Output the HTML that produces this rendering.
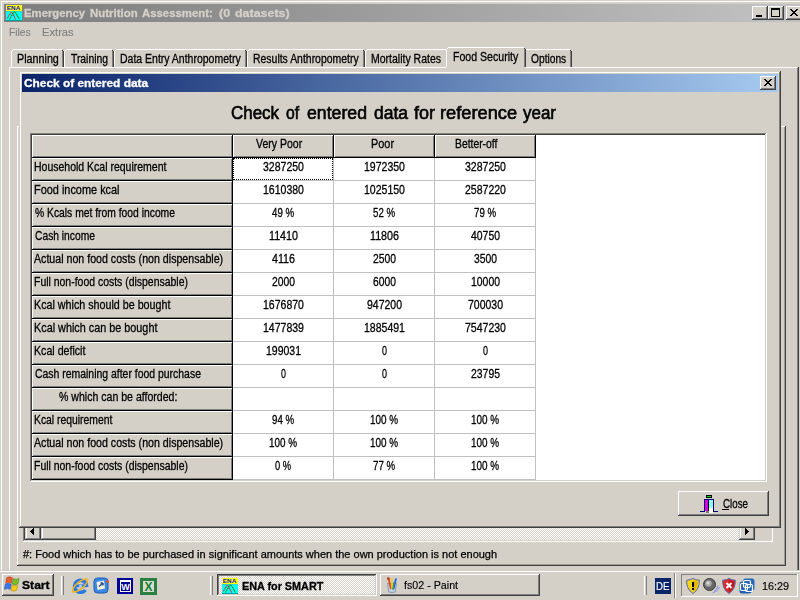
<!DOCTYPE html>
<html><head><meta charset="utf-8"><title>ENA for SMART</title>
<style>
html,body{margin:0;padding:0}
body{width:800px;height:600px;overflow:hidden;position:relative;background:#d4d0c8;font-family:"Liberation Sans",sans-serif}
div,span,i,b{position:absolute;box-sizing:border-box}
.tx{white-space:pre;line-height:20px;transform-origin:0 0;display:block}
.raised{box-shadow:inset -1px -1px #404040,inset 1px 1px #fff,inset -2px -2px #808080,inset 2px 2px #d4d0c8;background:#d4d0c8}
.raised2{box-shadow:inset -1px -1px #404040,inset 1px 1px #d4d0c8,inset -2px -2px #808080,inset 2px 2px #fff;background:#d4d0c8}
.sunk1{box-shadow:inset -1px -1px #fff,inset 1px 1px #808080}
.w{background:#fff}.g{background:#808080}.k{background:#404040}.bk{background:#000}.lg{background:#c0c0c0}
.dither{background-image:conic-gradient(#fff 25%,#d4d0c8 0 50%,#fff 0 75%,#d4d0c8 0);background-size:2px 2px}
#texts{left:0;top:0;width:800px;height:600px;will-change:transform}
.tx{-webkit-text-stroke:0.3px currentColor}

</style></head><body>
<!-- main application window -->
<div class="w" style="left:1px;top:1px;width:799px;height:1px;"></div>
<div class="w" style="left:1px;top:1px;width:1px;height:569px;"></div>
<div id="titlebar" style="left:4px;top:4px;width:796px;height:18px;background:linear-gradient(90deg,#808080 0,#808080 6%,#c0c0c0 96%)"></div>
<div id="appicon" style="left:6px;top:5px;width:16px;height:16px;"><svg width="16" height="16" viewBox="0 0 16 16" style="position:absolute;left:0;top:0">
<rect width="16" height="6" fill="#ffff00"/><rect y="6" width="16" height="10" fill="#00ffff"/>
<rect y="6" width="16" height="0.600" fill="#58b8b0"/>
<text x="0.800" y="5" font-family="Liberation Sans,sans-serif" font-weight="bold" font-size="6" fill="#1010d8" textLength="13.500" lengthAdjust="spacingAndGlyphs">ENA</text>
<path d="M1.300 13.200 L4.900 7.600 Q5.600 6.700 6.300 7.800 L9.600 14.500" fill="none" stroke="#e02818" stroke-width="1.100" stroke-dasharray="1.500 0.500"/>
<path d="M3.500 14.500 L7.300 7.800 Q8.500 6.300 9.700 7.800 L13.500 14.500" fill="none" stroke="#008800" stroke-width="1.100" stroke-dasharray="1.500 0.500"/>
<rect x="0" y="15" width="16" height="1" fill="#00a0a0"/>
</svg></div>
<div class="raised" style="left:752px;top:6px;width:16px;height:14px;"><i class="bk" style="left:4px;top:9px;width:6px;height:2px"></i></div>
<div class="raised" style="left:768px;top:6px;width:16px;height:14px;"><i style="left:3px;top:2px;width:9px;height:9px;border:1px solid #000;border-top-width:2px"></i></div>
<div class="raised" style="left:786px;top:6px;width:16px;height:14px;"><svg width="8" height="7" viewBox="0 0 8 7" style="position:absolute;left:4px;top:3px" shape-rendering="crispEdges"><path d="M0 0h2v1h1v1h2v-1h1v-1h2v1h-1v1h-1v1h-1v1h1v1h1v1h1v1h-2v-1h-1v-1h-2v1h-1v1h-2v-1h1v-1h1v-1h1v-1h-1v-1h-1v-1h-1z" fill="#000"/></svg></div>
<!-- tab control -->
<div class="w" style="left:9px;top:67px;width:788px;height:1px;"></div>
<div class="w" style="left:9px;top:67px;width:1px;height:503px;"></div>
<div class="g" style="left:797px;top:68px;width:1px;height:502px;"></div>
<div class="k" style="left:798px;top:67px;width:1px;height:503px;"></div>
<div class="w" style="left:11px;top:51px;width:1px;height:16px;"></div>
<div class="w" style="left:12px;top:50px;width:1px;height:1px;"></div>
<div class="w" style="left:13px;top:49px;width:49px;height:1px;"></div>
<div class="k" style="left:62px;top:50px;width:1px;height:1px;"></div>
<div class="g" style="left:62px;top:51px;width:1px;height:16px;"></div>
<div class="k" style="left:63px;top:51px;width:1px;height:16px;"></div>
<div class="w" style="left:64px;top:51px;width:1px;height:16px;"></div>
<div class="w" style="left:65px;top:50px;width:1px;height:1px;"></div>
<div class="w" style="left:66px;top:49px;width:46px;height:1px;"></div>
<div class="k" style="left:112px;top:50px;width:1px;height:1px;"></div>
<div class="g" style="left:112px;top:51px;width:1px;height:16px;"></div>
<div class="k" style="left:113px;top:51px;width:1px;height:16px;"></div>
<div class="w" style="left:114px;top:51px;width:1px;height:16px;"></div>
<div class="w" style="left:115px;top:50px;width:1px;height:1px;"></div>
<div class="w" style="left:116px;top:49px;width:129px;height:1px;"></div>
<div class="k" style="left:245px;top:50px;width:1px;height:1px;"></div>
<div class="g" style="left:245px;top:51px;width:1px;height:16px;"></div>
<div class="k" style="left:246px;top:51px;width:1px;height:16px;"></div>
<div class="w" style="left:247px;top:51px;width:1px;height:16px;"></div>
<div class="w" style="left:248px;top:50px;width:1px;height:1px;"></div>
<div class="w" style="left:249px;top:49px;width:114px;height:1px;"></div>
<div class="k" style="left:363px;top:50px;width:1px;height:1px;"></div>
<div class="g" style="left:363px;top:51px;width:1px;height:16px;"></div>
<div class="k" style="left:364px;top:51px;width:1px;height:16px;"></div>
<div class="w" style="left:365px;top:51px;width:1px;height:16px;"></div>
<div class="w" style="left:366px;top:50px;width:1px;height:1px;"></div>
<div class="w" style="left:367px;top:49px;width:79px;height:1px;"></div>
<div class="k" style="left:446px;top:50px;width:1px;height:1px;"></div>
<div class="g" style="left:446px;top:51px;width:1px;height:16px;"></div>
<div class="k" style="left:447px;top:51px;width:1px;height:16px;"></div>
<div class="w" style="left:524px;top:51px;width:1px;height:16px;"></div>
<div class="w" style="left:525px;top:50px;width:1px;height:1px;"></div>
<div class="w" style="left:526px;top:49px;width:44px;height:1px;"></div>
<div class="k" style="left:570px;top:50px;width:1px;height:1px;"></div>
<div class="g" style="left:570px;top:51px;width:1px;height:16px;"></div>
<div class="k" style="left:571px;top:51px;width:1px;height:16px;"></div>
<div style="left:446px;top:47px;width:80px;height:22px;background:#d4d0c8"></div>
<div class="w" style="left:446px;top:49px;width:1px;height:18px;"></div>
<div class="w" style="left:447px;top:48px;width:1px;height:1px;"></div>
<div class="w" style="left:448px;top:47px;width:76px;height:1px;"></div>
<div class="k" style="left:524px;top:48px;width:1px;height:1px;"></div>
<div class="g" style="left:524px;top:49px;width:1px;height:18px;"></div>
<div class="k" style="left:525px;top:49px;width:1px;height:18px;"></div>
<div class="w" style="left:17px;top:126px;width:1px;height:439px;"></div>
<div class="w" style="left:17px;top:126px;width:768px;height:1px;"></div>
<div style="left:784px;top:127px;width:1px;height:438px;background:#a09c96"></div>
<div style="left:18px;top:564px;width:767px;height:1px;background:#a09c96"></div>
<div class="k" style="left:785px;top:126px;width:1px;height:440px;"></div>
<div class="k" style="left:17px;top:565px;width:769px;height:1px;"></div>
<div style="left:23px;top:500px;width:750px;height:42px;box-shadow:inset -1px -1px #fff,inset 1px 1px #808080,inset -2px -2px #d4d0c8,inset 2px 2px #404040"></div>
<div class="dither" style="left:25px;top:524px;width:730px;height:16px;"></div>
<div class="raised2" style="left:25px;top:524px;width:16px;height:16px;"><svg width="4" height="7" style="position:absolute;left:5px;top:4px" shape-rendering="crispEdges"><path d="M4 0v7h-1v-1h-1v-1h-1v-1h-1v-1h1v-1h1v-1h1v-1z" fill="#000"/></svg></div>
<div class="raised2" style="left:41px;top:524px;width:55px;height:16px;"></div>
<div class="raised2" style="left:739px;top:524px;width:16px;height:16px;"><svg width="4" height="7" style="position:absolute;left:6px;top:4px" shape-rendering="crispEdges"><path d="M0 0v7h1v-1h1v-1h1v-1h1v-1h-1v-1h-1v-1h-1v-1z" fill="#000"/></svg></div>
<!-- dialog: Check of entered data -->
<div id="dialog" style="left:19px;top:71px;width:762px;height:457px;background:#d4d0c8;box-shadow:inset -1px -1px #404040,inset 1px 1px #d4d0c8,inset -2px -2px #808080,inset 2px 2px #fff"></div>
<div id="dlgtitle" style="left:22px;top:74px;width:756px;height:18px;background:linear-gradient(90deg,#0a246a,#a6caf0)"></div>
<div class="raised" style="left:760px;top:76px;width:16px;height:14px;"><svg width="8" height="7" viewBox="0 0 8 7" style="position:absolute;left:4px;top:3px" shape-rendering="crispEdges"><path d="M0 0h2v1h1v1h2v-1h1v-1h2v1h-1v1h-1v1h-1v1h1v1h1v1h1v1h-2v-1h-1v-1h-2v1h-1v1h-2v-1h1v-1h1v-1h1v-1h-1v-1h-1v-1h-1z" fill="#000"/></svg></div>
<div id="grid" style="left:30px;top:133px;width:737px;height:349px;background:#fff;box-shadow:inset -1px -1px #fff,inset 1px 1px #808080,inset -2px -2px #d4d0c8,inset 2px 2px #404040"></div>
<div style="left:32px;top:135px;width:200px;height:22px;background:#d4d0c8;box-shadow:inset 1px 1px #fff,inset -1px -1px #808080"></div>
<div style="left:233px;top:135px;width:100px;height:22px;background:#d4d0c8;box-shadow:inset 1px 1px #fff,inset -1px -1px #808080"></div>
<div style="left:334px;top:135px;width:100px;height:22px;background:#d4d0c8;box-shadow:inset 1px 1px #fff,inset -1px -1px #808080"></div>
<div style="left:435px;top:135px;width:100px;height:22px;background:#d4d0c8;box-shadow:inset 1px 1px #fff,inset -1px -1px #808080"></div>
<div style="left:32px;top:158px;width:200px;height:22px;background:#d4d0c8;box-shadow:inset 1px 1px #fff,inset -1px -1px #808080"></div>
<div style="left:32px;top:181px;width:200px;height:22px;background:#d4d0c8;box-shadow:inset 1px 1px #fff,inset -1px -1px #808080"></div>
<div style="left:32px;top:204px;width:200px;height:22px;background:#d4d0c8;box-shadow:inset 1px 1px #fff,inset -1px -1px #808080"></div>
<div style="left:32px;top:227px;width:200px;height:22px;background:#d4d0c8;box-shadow:inset 1px 1px #fff,inset -1px -1px #808080"></div>
<div style="left:32px;top:250px;width:200px;height:22px;background:#d4d0c8;box-shadow:inset 1px 1px #fff,inset -1px -1px #808080"></div>
<div style="left:32px;top:273px;width:200px;height:22px;background:#d4d0c8;box-shadow:inset 1px 1px #fff,inset -1px -1px #808080"></div>
<div style="left:32px;top:296px;width:200px;height:22px;background:#d4d0c8;box-shadow:inset 1px 1px #fff,inset -1px -1px #808080"></div>
<div style="left:32px;top:319px;width:200px;height:22px;background:#d4d0c8;box-shadow:inset 1px 1px #fff,inset -1px -1px #808080"></div>
<div style="left:32px;top:342px;width:200px;height:22px;background:#d4d0c8;box-shadow:inset 1px 1px #fff,inset -1px -1px #808080"></div>
<div style="left:32px;top:365px;width:200px;height:22px;background:#d4d0c8;box-shadow:inset 1px 1px #fff,inset -1px -1px #808080"></div>
<div style="left:32px;top:388px;width:200px;height:22px;background:#d4d0c8;box-shadow:inset 1px 1px #fff,inset -1px -1px #808080"></div>
<div style="left:32px;top:411px;width:200px;height:22px;background:#d4d0c8;box-shadow:inset 1px 1px #fff,inset -1px -1px #808080"></div>
<div style="left:32px;top:434px;width:200px;height:22px;background:#d4d0c8;box-shadow:inset 1px 1px #fff,inset -1px -1px #808080"></div>
<div style="left:32px;top:457px;width:200px;height:22px;background:#d4d0c8;box-shadow:inset 1px 1px #fff,inset -1px -1px #808080"></div>
<div class="bk" style="left:32px;top:157px;width:504px;height:1px;"></div>
<div class="bk" style="left:232px;top:135px;width:1px;height:345px;"></div>
<div class="bk" style="left:333px;top:135px;width:1px;height:22px;"></div>
<div class="bk" style="left:434px;top:135px;width:1px;height:22px;"></div>
<div class="bk" style="left:535px;top:135px;width:1px;height:22px;"></div>
<div class="bk" style="left:32px;top:180px;width:200px;height:1px;"></div>
<div class="bk" style="left:32px;top:203px;width:200px;height:1px;"></div>
<div class="bk" style="left:32px;top:226px;width:200px;height:1px;"></div>
<div class="bk" style="left:32px;top:249px;width:200px;height:1px;"></div>
<div class="bk" style="left:32px;top:272px;width:200px;height:1px;"></div>
<div class="bk" style="left:32px;top:295px;width:200px;height:1px;"></div>
<div class="bk" style="left:32px;top:318px;width:200px;height:1px;"></div>
<div class="bk" style="left:32px;top:341px;width:200px;height:1px;"></div>
<div class="bk" style="left:32px;top:364px;width:200px;height:1px;"></div>
<div class="bk" style="left:32px;top:387px;width:200px;height:1px;"></div>
<div class="bk" style="left:32px;top:410px;width:200px;height:1px;"></div>
<div class="bk" style="left:32px;top:433px;width:200px;height:1px;"></div>
<div class="bk" style="left:32px;top:456px;width:200px;height:1px;"></div>
<div class="bk" style="left:32px;top:479px;width:200px;height:1px;"></div>
<div class="lg" style="left:333px;top:158px;width:1px;height:322px;"></div>
<div class="lg" style="left:434px;top:158px;width:1px;height:322px;"></div>
<div class="lg" style="left:535px;top:158px;width:1px;height:322px;"></div>
<div class="lg" style="left:233px;top:180px;width:303px;height:1px;"></div>
<div class="lg" style="left:233px;top:203px;width:303px;height:1px;"></div>
<div class="lg" style="left:233px;top:226px;width:303px;height:1px;"></div>
<div class="lg" style="left:233px;top:249px;width:303px;height:1px;"></div>
<div class="lg" style="left:233px;top:272px;width:303px;height:1px;"></div>
<div class="lg" style="left:233px;top:295px;width:303px;height:1px;"></div>
<div class="lg" style="left:233px;top:318px;width:303px;height:1px;"></div>
<div class="lg" style="left:233px;top:341px;width:303px;height:1px;"></div>
<div class="lg" style="left:233px;top:364px;width:303px;height:1px;"></div>
<div class="lg" style="left:233px;top:387px;width:303px;height:1px;"></div>
<div class="lg" style="left:233px;top:410px;width:303px;height:1px;"></div>
<div class="lg" style="left:233px;top:433px;width:303px;height:1px;"></div>
<div class="lg" style="left:233px;top:456px;width:303px;height:1px;"></div>
<div class="lg" style="left:233px;top:479px;width:303px;height:1px;"></div>
<div style="left:233px;top:158px;width:100px;height:22px;border:1px dotted #000"></div>
<div id="closebtn" class="raised" style="left:678px;top:491px;width:91px;height:25px;"><svg width="18" height="18" viewBox="0 0 18 18" style="position:absolute;left:22px;top:4px" shape-rendering="crispEdges">
<rect x="6" y="0" width="6" height="3" fill="#000"/><rect x="7" y="1" width="4" height="1" fill="#00e000"/>
<rect x="4" y="4" width="10" height="1" fill="#000080"/><rect x="4" y="4" width="1" height="13" fill="#000080"/><rect x="13" y="4" width="1" height="13" fill="#000080"/>
<rect x="0" y="16" width="5" height="1" fill="#000080"/><rect x="13" y="16" width="5" height="1" fill="#000080"/>
<rect x="5" y="5" width="3" height="11" fill="#d800d8"/>
<rect x="8" y="5" width="1" height="11" fill="#000"/>
<rect x="9" y="5" width="4" height="8" fill="#90ffff"/><rect x="9" y="13" width="4" height="5" fill="#fff"/>
<rect x="6" y="16" width="3" height="2" fill="#808080"/>
</svg><i class="bk" style="left:44px;top:18px;width:7px;height:1px"></i></div>
<!-- taskbar -->
<div id="taskbar" style="left:0px;top:570px;width:800px;height:30px;background:#d4d0c8"></div>
<div class="w" style="left:0px;top:571px;width:800px;height:1px;"></div>
<div id="start" class="raised" style="left:2px;top:574px;width:52px;height:22px;"><svg width="16" height="16" viewBox="0 0 16 16" style="position:absolute;left:2px;top:2px">
<path d="M2.600 1.800 Q5.400 -0.200 8.400 1.800 L7.400 7.200 Q4.600 5.400 1.600 7.200 Z" fill="#f05a28" stroke="#a03818" stroke-width="0.500"/>
<path d="M9.200 2.600 Q12 4.200 15 2.400 L14 7.800 Q11 9.600 8.200 8 Z" fill="#78c028" stroke="#487818" stroke-width="0.500"/>
<path d="M1.400 8.200 Q4.200 6.400 7.200 8.200 L6.200 13.400 Q3.400 11.600 0.400 13.400 Z" fill="#3878e8" stroke="#2048a0" stroke-width="0.500"/>
<path d="M8 9 Q10.800 10.600 13.800 8.800 L12.800 14.200 Q10 16 7 14.400 Z" fill="#f8c818" stroke="#a88410" stroke-width="0.500"/>
</svg></div>
<div class="w" style="left:61px;top:576px;width:1px;height:19px;"></div>
<div class="g" style="left:63px;top:576px;width:1px;height:19px;"></div>
<div style="left:72px;top:577px;width:17px;height:17px;"><svg width="17" height="17" viewBox="0 0 17 17">
<path d="M14.600 9.800 A6 6 0 1 0 13.400 13" fill="none" stroke="#2a7ae4" stroke-width="3.600"/>
<rect x="3.500" y="7.400" width="11.500" height="2.800" fill="#2a7ae4"/>
<circle cx="8.500" cy="9" r="1.500" fill="#a8d0f8"/>
<ellipse cx="8" cy="8.500" rx="9.200" ry="3.400" transform="rotate(-40 8 8.500)" fill="none" stroke="#f0b418" stroke-width="1.600"/>
</svg></div>
<div style="left:93px;top:577px;width:17px;height:17px;"><svg width="17" height="17" viewBox="0 0 17 17">
<rect x="1" y="1" width="14" height="15" rx="3.500" fill="#3a8ae4" stroke="#1c58b4"/>
<path d="M3.500 5 L11 3.500 L12 11.500 L4.500 13 Z" fill="#f4f0dc"/>
<path d="M6 9.500 L10 6 M10 6 L10 8.500 M10 6 L7.600 6" stroke="#204890" stroke-width="1.300" fill="none"/>
<circle cx="14.500" cy="4.500" r="1.400" fill="#e05030"/>
</svg></div>
<div style="left:117px;top:578px;width:16px;height:16px;background:#000098"><svg width="16" height="16" viewBox="0 0 16 16" style="position:absolute;left:0;top:0">
<rect x="3.500" y="3" width="10" height="10.500" fill="none" stroke="#fff" stroke-width="1"/><rect x="3" y="2" width="11" height="2" fill="#fff"/>
<text x="8.500" y="12" font-family="Liberation Sans,sans-serif" font-weight="bold" font-size="9" fill="#fff" text-anchor="middle">W</text></svg></div>
<div style="left:140px;top:578px;width:17px;height:17px;background:#2a8040"><svg width="17" height="17" viewBox="0 0 17 17" style="position:absolute;left:0;top:0">
<rect x="3" y="3" width="11" height="11" fill="#d8dcd0"/>
<text x="8.500" y="13" font-family="Liberation Sans,sans-serif" font-weight="bold" font-size="12" fill="#108030" text-anchor="middle">X</text></svg></div>
<div class="w" style="left:210px;top:576px;width:1px;height:19px;"></div>
<div class="g" style="left:212px;top:576px;width:1px;height:19px;"></div>
<div id="task1" style="left:217px;top:574px;width:160px;height:22px;background-image:conic-gradient(#fff 25%,#d4d0c8 0 50%,#fff 0 75%,#d4d0c8 0);background-size:2px 2px;box-shadow:inset -1px -1px #fff,inset 1px 1px #404040,inset -2px -2px #d4d0c8,inset 2px 2px #808080"></div>
<div style="left:222px;top:578px;width:16px;height:16px;"><svg width="16" height="16" viewBox="0 0 16 16" style="position:absolute;left:0;top:0">
<rect width="16" height="6" fill="#ffff00"/><rect y="6" width="16" height="10" fill="#00ffff"/>
<rect y="6" width="16" height="0.600" fill="#58b8b0"/>
<text x="0.800" y="5" font-family="Liberation Sans,sans-serif" font-weight="bold" font-size="6" fill="#1010d8" textLength="13.500" lengthAdjust="spacingAndGlyphs">ENA</text>
<path d="M1.300 13.200 L4.900 7.600 Q5.600 6.700 6.300 7.800 L9.600 14.500" fill="none" stroke="#e02818" stroke-width="1.100" stroke-dasharray="1.500 0.500"/>
<path d="M3.500 14.500 L7.300 7.800 Q8.500 6.300 9.700 7.800 L13.500 14.500" fill="none" stroke="#008800" stroke-width="1.100" stroke-dasharray="1.500 0.500"/>
<rect x="0" y="15" width="16" height="1" fill="#00a0a0"/>
</svg></div>
<div id="task2" class="raised" style="left:380px;top:574px;width:160px;height:22px;"></div>
<div style="left:386px;top:577px;width:12px;height:16px;"><svg width="12" height="16" viewBox="0 0 12 16">
<path d="M1.500 6.500 L10.500 6.500 L9.200 15 Q6 16 2.800 15 Z" fill="#c4d0e8" stroke="#7888b0" stroke-width="0.800"/>
<path d="M2.500 1.500 L5 12" stroke="#e04818" stroke-width="1.800"/><circle cx="2.300" cy="1.500" r="1.300" fill="#b03010"/>
<path d="M5.800 1 L6 12" stroke="#f0c820" stroke-width="1.600"/>
<path d="M10 1.500 L7.500 12" stroke="#2860d8" stroke-width="1.800"/>
<path d="M8 5 L6.800 13" stroke="#30a040" stroke-width="1.200"/>
</svg></div>
<div class="w" style="left:644px;top:576px;width:1px;height:19px;"></div>
<div class="g" style="left:646px;top:576px;width:1px;height:19px;"></div>
<div id="lang" style="left:655px;top:578px;width:16px;height:16px;background:#0a246a"></div>
<div class="g" style="left:674px;top:573px;width:1px;height:25px;"></div>
<div class="w" style="left:675px;top:573px;width:1px;height:25px;"></div>
<div id="tray" class="sunk1" style="left:681px;top:574px;width:117px;height:23px;"></div>
<div style="left:686px;top:578px;width:14px;height:16px;"><svg width="14" height="16" viewBox="0 0 14 16"><path d="M7 0.500 Q10 2.200 13.300 2.200 Q13.800 11 7 15.500 Q0.200 11 0.700 2.200 Q4 2.200 7 0.500 Z" fill="#f4d818" stroke="#5868a8" stroke-width="1"/><path d="M7 2 Q9.500 3.300 12 3.400 Q12.200 10 7 13.800 Z" fill="#e0b800"/><rect x="6" y="4" width="2" height="5" fill="#000"/><rect x="6" y="10" width="2" height="2" fill="#000"/></svg></div>
<div style="left:703px;top:578px;width:17px;height:16px;"><svg width="17" height="16" viewBox="0 0 17 16"><ellipse cx="6.500" cy="6.500" rx="6" ry="6" fill="#686868" stroke="#383838"/><ellipse cx="5.500" cy="5.500" rx="3.200" ry="3.200" fill="#a8a8a8"/><ellipse cx="5" cy="5" rx="1.500" ry="1.500" fill="#d8d8d8"/><path d="M11 13.500 Q14.500 11.500 15 7.500 M9.500 15 Q15 13.500 16.500 9" stroke="#8890e8" fill="none" stroke-width="1"/></svg></div>
<div style="left:722px;top:578px;width:14px;height:16px;"><svg width="14" height="16" viewBox="0 0 14 16"><path d="M7 0.500 Q10 2.200 13.300 2.200 Q13.800 11 7 15.500 Q0.200 11 0.700 2.200 Q4 2.200 7 0.500 Z" fill="#e02828" stroke="#5868a8" stroke-width="1"/><path d="M7 2 Q9.500 3.300 12 3.400 Q12.200 10 7 13.800 Z" fill="#b81818"/><path d="M4.500 5 L9.500 10 M9.500 5 L4.500 10" stroke="#fff" stroke-width="2"/></svg></div>
<div style="left:739px;top:578px;width:16px;height:16px;"><svg width="16" height="16" viewBox="0 0 16 16"><rect x="0.500" y="3.500" width="12" height="12" rx="2.500" fill="#1c5cb0"/><rect x="4" y="0.500" width="11.500" height="12" rx="2.500" fill="#2868b8"/>
<rect x="1.500" y="5.500" width="7" height="7" rx="1.500" fill="none" stroke="#fff" stroke-width="1.200"/><rect x="4.500" y="2.500" width="7" height="7" rx="1.500" fill="none" stroke="#fff" stroke-width="1.200"/><rect x="6.500" y="6.500" width="7" height="7" rx="1.500" fill="none" stroke="#fff" stroke-width="1.200"/></svg></div>
<div id="texts">
<span class="tx " style="-webkit-text-stroke-width:0.3px;left:24.00px;top:3px;font:bold 11px 'Liberation Sans';line-height:20px;color:#d4d0c8;transform:scaleX(1.0303)">Emergency</span>
<span class="tx " style="-webkit-text-stroke-width:0.3px;left:90.00px;top:3px;font:bold 11px 'Liberation Sans';line-height:20px;color:#d4d0c8;transform:scaleX(1.0414)">Nutrition</span>
<span class="tx " style="-webkit-text-stroke-width:0.3px;left:142.01px;top:3px;font:bold 11px 'Liberation Sans';line-height:20px;color:#d4d0c8;transform:scaleX(1.0324)">Assessment:</span>
<span class="tx " style="-webkit-text-stroke-width:0.3px;left:219.00px;top:3px;font:bold 11px 'Liberation Sans';line-height:20px;color:#d4d0c8;transform:scaleX(1.1384)">(0</span>
<span class="tx " style="-webkit-text-stroke-width:0.3px;left:235.00px;top:3px;font:bold 11px 'Liberation Sans';line-height:20px;color:#d4d0c8;transform:scaleX(1.1313)">datasets)</span>
<span class="tx " style="-webkit-text-stroke-width:0.15px;left:8.89px;top:22px;font:11px 'Liberation Sans';line-height:20px;color:#808080;transform:scaleX(0.9367)">Files</span>
<span class="tx " style="-webkit-text-stroke-width:0.15px;left:41.93px;top:22px;font:11px 'Liberation Sans';line-height:20px;color:#808080;transform:scaleX(1.0148)">Extras</span>
<span class="tx " style="-webkit-text-stroke-width:0.3px;left:17.14px;top:49px;font:12.5px 'Liberation Sans';line-height:20px;color:#000;transform:scaleX(0.8601)">Planning</span>
<span class="tx " style="-webkit-text-stroke-width:0.3px;left:71.00px;top:49px;font:12.5px 'Liberation Sans';line-height:20px;color:#000;transform:scaleX(0.8269)">Training</span>
<span class="tx " style="-webkit-text-stroke-width:0.3px;left:120.16px;top:49px;font:12.5px 'Liberation Sans';line-height:20px;color:#000;transform:scaleX(0.8388)">Data Entry Anthropometry</span>
<span class="tx " style="-webkit-text-stroke-width:0.3px;left:253.16px;top:49px;font:12.5px 'Liberation Sans';line-height:20px;color:#000;transform:scaleX(0.8355)">Results Anthropometry</span>
<span class="tx " style="-webkit-text-stroke-width:0.3px;left:371.16px;top:49px;font:12.5px 'Liberation Sans';line-height:20px;color:#000;transform:scaleX(0.8404)">Mortality Rates</span>
<span class="tx " style="-webkit-text-stroke-width:0.3px;left:531.00px;top:49px;font:12.5px 'Liberation Sans';line-height:20px;color:#000;transform:scaleX(0.8172)">Options</span>
<span class="tx " style="-webkit-text-stroke-width:0.3px;left:453.15px;top:47px;font:12.5px 'Liberation Sans';line-height:20px;color:#000;transform:scaleX(0.8458)">Food Security</span>
<span class="tx " style="-webkit-text-stroke-width:0.3px;left:24.00px;top:73px;font:bold 11px 'Liberation Sans';line-height:20px;color:#fff;transform:scaleX(1.0796)">Check of entered data</span>
<span class="tx " style="-webkit-text-stroke-width:0.6px;left:231.00px;top:103px;font:18px 'Liberation Sans';line-height:20px;color:#000;transform:scaleX(0.9423)">Check</span>
<span class="tx " style="-webkit-text-stroke-width:0.6px;left:286.00px;top:103px;font:18px 'Liberation Sans';line-height:20px;color:#000;transform:scaleX(0.8744)">of</span>
<span class="tx " style="-webkit-text-stroke-width:0.6px;left:307.00px;top:103px;font:18px 'Liberation Sans';line-height:20px;color:#000;transform:scaleX(0.9827)">entered</span>
<span class="tx " style="-webkit-text-stroke-width:0.6px;left:374.00px;top:103px;font:18px 'Liberation Sans';line-height:20px;color:#000;transform:scaleX(0.9725)">data</span>
<span class="tx " style="-webkit-text-stroke-width:0.6px;left:414.00px;top:103px;font:18px 'Liberation Sans';line-height:20px;color:#000;transform:scaleX(1.0005)">for</span>
<span class="tx " style="-webkit-text-stroke-width:0.6px;left:439.99px;top:103px;font:18px 'Liberation Sans';line-height:20px;color:#000;transform:scaleX(1.0130)">reference</span>
<span class="tx " style="-webkit-text-stroke-width:0.6px;left:523.00px;top:103px;font:18px 'Liberation Sans';line-height:20px;color:#000;transform:scaleX(0.9427)">year</span>
<span class="tx " style="-webkit-text-stroke-width:0.3px;left:34.16px;top:157px;font:12.5px 'Liberation Sans';line-height:20px;color:#000;transform:scaleX(0.8394)">Household Kcal requirement</span>
<span class="tx " style="-webkit-text-stroke-width:0.3px;left:34.13px;top:180px;font:12.5px 'Liberation Sans';line-height:20px;color:#000;transform:scaleX(0.8733)">Food income kcal</span>
<span class="tx " style="-webkit-text-stroke-width:0.3px;left:35.00px;top:203px;font:12.5px 'Liberation Sans';line-height:20px;color:#000;transform:scaleX(0.8257)">% Kcals met from food income</span>
<span class="tx " style="-webkit-text-stroke-width:0.3px;left:35.00px;top:226px;font:12.5px 'Liberation Sans';line-height:20px;color:#000;transform:scaleX(0.8219)">Cash income</span>
<span class="tx " style="-webkit-text-stroke-width:0.3px;left:34.00px;top:249px;font:12.5px 'Liberation Sans';line-height:20px;color:#000;transform:scaleX(0.8506)">Actual non food costs (non dispensable)</span>
<span class="tx " style="-webkit-text-stroke-width:0.3px;left:34.16px;top:272px;font:12.5px 'Liberation Sans';line-height:20px;color:#000;transform:scaleX(0.8362)">Full non-food costs (dispensable)</span>
<span class="tx " style="-webkit-text-stroke-width:0.3px;left:34.14px;top:295px;font:12.5px 'Liberation Sans';line-height:20px;color:#000;transform:scaleX(0.8572)">Kcal which should be bought</span>
<span class="tx " style="-webkit-text-stroke-width:0.3px;left:34.13px;top:318px;font:12.5px 'Liberation Sans';line-height:20px;color:#000;transform:scaleX(0.8663)">Kcal which can be bought</span>
<span class="tx " style="-webkit-text-stroke-width:0.3px;left:34.15px;top:341px;font:12.5px 'Liberation Sans';line-height:20px;color:#000;transform:scaleX(0.8504)">Kcal deficit</span>
<span class="tx " style="-webkit-text-stroke-width:0.3px;left:35.00px;top:364px;font:12.5px 'Liberation Sans';line-height:20px;color:#000;transform:scaleX(0.8351)">Cash remaining after food purchase</span>
<span class="tx " style="-webkit-text-stroke-width:0.3px;left:59.00px;top:387px;font:12.5px 'Liberation Sans';line-height:20px;color:#000;transform:scaleX(0.8449)">% which can be afforded:</span>
<span class="tx " style="-webkit-text-stroke-width:0.3px;left:34.17px;top:410px;font:12.5px 'Liberation Sans';line-height:20px;color:#000;transform:scaleX(0.8296)">Kcal requirement</span>
<span class="tx " style="-webkit-text-stroke-width:0.3px;left:34.00px;top:433px;font:12.5px 'Liberation Sans';line-height:20px;color:#000;transform:scaleX(0.8506)">Actual non food costs (non dispensable)</span>
<span class="tx " style="-webkit-text-stroke-width:0.3px;left:34.16px;top:456px;font:12.5px 'Liberation Sans';line-height:20px;color:#000;transform:scaleX(0.8362)">Full non-food costs (dispensable)</span>
<span class="tx " style="-webkit-text-stroke-width:0.3px;left:256.00px;top:134px;font:12.5px 'Liberation Sans';line-height:20px;color:#000;transform:scaleX(0.8405)">Very Poor</span>
<span class="tx " style="-webkit-text-stroke-width:0.3px;left:371.13px;top:134px;font:12.5px 'Liberation Sans';line-height:20px;color:#000;transform:scaleX(0.8716)">Poor</span>
<span class="tx " style="-webkit-text-stroke-width:0.3px;left:455.17px;top:134px;font:12.5px 'Liberation Sans';line-height:20px;color:#000;transform:scaleX(0.8282)">Better-off</span>
<span class="tx " style="-webkit-text-stroke-width:0.3px;left:263.00px;top:157px;font:12.5px 'Liberation Sans';line-height:20px;color:#000;transform:scaleX(0.8417)">3287250</span>
<span class="tx " style="-webkit-text-stroke-width:0.3px;left:364.00px;top:157px;font:12.5px 'Liberation Sans';line-height:20px;color:#000;transform:scaleX(0.8417)">1972350</span>
<span class="tx " style="-webkit-text-stroke-width:0.3px;left:465.00px;top:157px;font:12.5px 'Liberation Sans';line-height:20px;color:#000;transform:scaleX(0.8417)">3287250</span>
<span class="tx " style="-webkit-text-stroke-width:0.3px;left:263.00px;top:180px;font:12.5px 'Liberation Sans';line-height:20px;color:#000;transform:scaleX(0.8417)">1610380</span>
<span class="tx " style="-webkit-text-stroke-width:0.3px;left:364.00px;top:180px;font:12.5px 'Liberation Sans';line-height:20px;color:#000;transform:scaleX(0.8417)">1025150</span>
<span class="tx " style="-webkit-text-stroke-width:0.3px;left:465.00px;top:180px;font:12.5px 'Liberation Sans';line-height:20px;color:#000;transform:scaleX(0.8417)">2587220</span>
<span class="tx " style="-webkit-text-stroke-width:0.3px;left:272.00px;top:203px;font:12.5px 'Liberation Sans';line-height:20px;color:#000;transform:scaleX(0.7753)">49 %</span>
<span class="tx " style="-webkit-text-stroke-width:0.3px;left:373.00px;top:203px;font:12.5px 'Liberation Sans';line-height:20px;color:#000;transform:scaleX(0.7753)">52 %</span>
<span class="tx " style="-webkit-text-stroke-width:0.3px;left:474.00px;top:203px;font:12.5px 'Liberation Sans';line-height:20px;color:#000;transform:scaleX(0.7753)">79 %</span>
<span class="tx " style="-webkit-text-stroke-width:0.3px;left:269.00px;top:226px;font:12.5px 'Liberation Sans';line-height:20px;color:#000;transform:scaleX(0.8560)">11410</span>
<span class="tx " style="-webkit-text-stroke-width:0.3px;left:370.00px;top:226px;font:12.5px 'Liberation Sans';line-height:20px;color:#000;transform:scaleX(0.8560)">11806</span>
<span class="tx " style="-webkit-text-stroke-width:0.3px;left:471.00px;top:226px;font:12.5px 'Liberation Sans';line-height:20px;color:#000;transform:scaleX(0.8332)">40750</span>
<span class="tx " style="-webkit-text-stroke-width:0.3px;left:272.00px;top:249px;font:12.5px 'Liberation Sans';line-height:20px;color:#000;transform:scaleX(0.8541)">4116</span>
<span class="tx " style="-webkit-text-stroke-width:0.3px;left:373.00px;top:249px;font:12.5px 'Liberation Sans';line-height:20px;color:#000;transform:scaleX(0.8257)">2500</span>
<span class="tx " style="-webkit-text-stroke-width:0.3px;left:474.00px;top:249px;font:12.5px 'Liberation Sans';line-height:20px;color:#000;transform:scaleX(0.8257)">3500</span>
<span class="tx " style="-webkit-text-stroke-width:0.3px;left:272.00px;top:272px;font:12.5px 'Liberation Sans';line-height:20px;color:#000;transform:scaleX(0.8257)">2000</span>
<span class="tx " style="-webkit-text-stroke-width:0.3px;left:373.00px;top:272px;font:12.5px 'Liberation Sans';line-height:20px;color:#000;transform:scaleX(0.8257)">6000</span>
<span class="tx " style="-webkit-text-stroke-width:0.3px;left:471.00px;top:272px;font:12.5px 'Liberation Sans';line-height:20px;color:#000;transform:scaleX(0.8332)">10000</span>
<span class="tx " style="-webkit-text-stroke-width:0.3px;left:263.00px;top:295px;font:12.5px 'Liberation Sans';line-height:20px;color:#000;transform:scaleX(0.8417)">1676870</span>
<span class="tx " style="-webkit-text-stroke-width:0.3px;left:367.00px;top:295px;font:12.5px 'Liberation Sans';line-height:20px;color:#000;transform:scaleX(0.8381)">947200</span>
<span class="tx " style="-webkit-text-stroke-width:0.3px;left:468.00px;top:295px;font:12.5px 'Liberation Sans';line-height:20px;color:#000;transform:scaleX(0.8381)">700030</span>
<span class="tx " style="-webkit-text-stroke-width:0.3px;left:263.00px;top:318px;font:12.5px 'Liberation Sans';line-height:20px;color:#000;transform:scaleX(0.8417)">1477839</span>
<span class="tx " style="-webkit-text-stroke-width:0.3px;left:364.00px;top:318px;font:12.5px 'Liberation Sans';line-height:20px;color:#000;transform:scaleX(0.8417)">1885491</span>
<span class="tx " style="-webkit-text-stroke-width:0.3px;left:465.00px;top:318px;font:12.5px 'Liberation Sans';line-height:20px;color:#000;transform:scaleX(0.8417)">7547230</span>
<span class="tx " style="-webkit-text-stroke-width:0.3px;left:266.00px;top:341px;font:12.5px 'Liberation Sans';line-height:20px;color:#000;transform:scaleX(0.8381)">199031</span>
<span class="tx " style="-webkit-text-stroke-width:0.3px;left:382.00px;top:341px;font:12.5px 'Liberation Sans';line-height:20px;color:#000;transform:scaleX(0.7143)">0</span>
<span class="tx " style="-webkit-text-stroke-width:0.3px;left:483.00px;top:341px;font:12.5px 'Liberation Sans';line-height:20px;color:#000;transform:scaleX(0.7143)">0</span>
<span class="tx " style="-webkit-text-stroke-width:0.3px;left:281.00px;top:364px;font:12.5px 'Liberation Sans';line-height:20px;color:#000;transform:scaleX(0.7143)">0</span>
<span class="tx " style="-webkit-text-stroke-width:0.3px;left:382.00px;top:364px;font:12.5px 'Liberation Sans';line-height:20px;color:#000;transform:scaleX(0.7143)">0</span>
<span class="tx " style="-webkit-text-stroke-width:0.3px;left:471.00px;top:364px;font:12.5px 'Liberation Sans';line-height:20px;color:#000;transform:scaleX(0.8332)">23795</span>
<span class="tx " style="-webkit-text-stroke-width:0.3px;left:272.00px;top:410px;font:12.5px 'Liberation Sans';line-height:20px;color:#000;transform:scaleX(0.7753)">94 %</span>
<span class="tx " style="-webkit-text-stroke-width:0.3px;left:370.00px;top:410px;font:12.5px 'Liberation Sans';line-height:20px;color:#000;transform:scaleX(0.7926)">100 %</span>
<span class="tx " style="-webkit-text-stroke-width:0.3px;left:471.00px;top:410px;font:12.5px 'Liberation Sans';line-height:20px;color:#000;transform:scaleX(0.7926)">100 %</span>
<span class="tx " style="-webkit-text-stroke-width:0.3px;left:269.00px;top:433px;font:12.5px 'Liberation Sans';line-height:20px;color:#000;transform:scaleX(0.7926)">100 %</span>
<span class="tx " style="-webkit-text-stroke-width:0.3px;left:370.00px;top:433px;font:12.5px 'Liberation Sans';line-height:20px;color:#000;transform:scaleX(0.7926)">100 %</span>
<span class="tx " style="-webkit-text-stroke-width:0.3px;left:471.00px;top:433px;font:12.5px 'Liberation Sans';line-height:20px;color:#000;transform:scaleX(0.7926)">100 %</span>
<span class="tx " style="-webkit-text-stroke-width:0.3px;left:275.00px;top:456px;font:12.5px 'Liberation Sans';line-height:20px;color:#000;transform:scaleX(0.7468)">0 %</span>
<span class="tx " style="-webkit-text-stroke-width:0.3px;left:373.00px;top:456px;font:12.5px 'Liberation Sans';line-height:20px;color:#000;transform:scaleX(0.7753)">77 %</span>
<span class="tx " style="-webkit-text-stroke-width:0.3px;left:471.00px;top:456px;font:12.5px 'Liberation Sans';line-height:20px;color:#000;transform:scaleX(0.7926)">100 %</span>
<span class="tx " style="-webkit-text-stroke-width:0.3px;left:723.00px;top:494px;font:12.5px 'Liberation Sans';line-height:20px;color:#000;transform:scaleX(0.7811)">Close</span>
<span class="tx " style="-webkit-text-stroke-width:0.25px;left:23.00px;top:544px;font:11.01px 'Liberation Sans';line-height:20px;color:#000;transform:scaleX(0.9991)">#: Food which has to be purchased in significant amounts when the own production is not enough</span>
<span class="tx " style="-webkit-text-stroke-width:0.3px;left:22.00px;top:575px;font:bold 11px 'Liberation Sans';line-height:20px;color:#000;transform:scaleX(1.1024)">Start</span>
<span class="tx " style="-webkit-text-stroke-width:0.3px;left:242.00px;top:576px;font:bold 11px 'Liberation Sans';line-height:20px;color:#000;transform:scaleX(0.9834)">ENA for SMART</span>
<span class="tx " style="-webkit-text-stroke-width:0.15px;left:404.00px;top:575px;font:11px 'Liberation Sans';line-height:20px;color:#000;transform:scaleX(0.9715)">fs02 - Paint</span>
<span class="tx " style="-webkit-text-stroke-width:0.15px;left:655.91px;top:576px;font:11px 'Liberation Sans';line-height:20px;color:#fff;transform:scaleX(0.8760)">DE</span>
<span class="tx " style="-webkit-text-stroke-width:0.15px;left:761.96px;top:576px;font:11px 'Liberation Sans';line-height:20px;color:#000;transform:scaleX(0.9865)">16:29</span>
</div>
</body></html>
